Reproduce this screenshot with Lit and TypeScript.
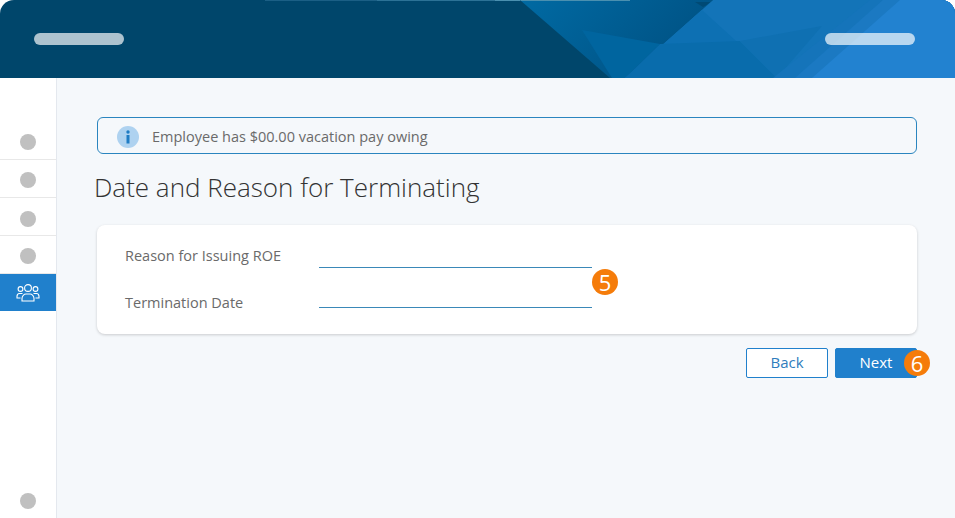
import { LitElement, css, html, svg } from 'lit';
import { customElement } from 'lit/decorators.js';

const SHAPES = [
  { points: '265,0 377,0 377,1 265,1', fill: '#1b5f85' },
  { points: '377,0 495,0 495,1 377,1', fill: '#2c7296' },
  { points: '495,0 520,0 520,1 495,1', fill: '#4a90b0' },
  { points: '520,0 713,0 625,78 610,78', fill: 'url(#band)' },
  { points: '520,0 630,0 630,1 521,1', fill: '#4a90b0' },
  { points: '695,2 712,2 703,7', fill: '#004a75' },
  { points: '582,30 660,44 625,78 612,78', fill: '#00659f' },
  { points: '713,0 955,0 955,78 625,78', fill: '#1374b8' },
  { points: '713,0 625,78 777,78 702,10', fill: '#0d70b3' },
  { points: '660,44 740,41 777,78 625,78', fill: '#096cac' },
  { points: '740,41 822,26 777,78', fill: '#0f70b2' },
  { points: '870,0 955,0 955,78 773,78', fill: '#1574ba' },
  { points: '883,0 955,0 955,78 795,78', fill: '#1b79c2' },
  { points: '900,0 955,0 955,78 812,78', fill: '#2282d0' },
];

@customElement('app-root')
export class AppRoot extends LitElement {
  static styles = css`
    :host {
      display: block;
      width: 955px;
      height: 518px;
      overflow: hidden;
      background: #fff;
      font-family: 'Open Sans', sans-serif;
      color: #555;
    }

    .header {
      position: relative;
      height: 78px;
      padding: 0 40px 0 34px;
      display: flex;
      align-items: center;
      justify-content: space-between;
      background: #00466b;
      border-radius: 14px 14px 0 0;
      overflow: hidden;
      box-sizing: border-box;
    }
    .header-art {
      position: absolute;
      left: 0;
      top: 0;
    }
    .pill {
      position: relative;
      width: 90px;
      height: 12px;
      border-radius: 6px;
      background: rgba(255, 255, 255, 0.68);
    }

    .body {
      display: flex;
      height: 440px;
    }

    .sidebar {
      width: 56px;
      flex: none;
      background: #fff;
      border-right: 1px solid #e4e8ee;
      box-shadow: 1px 0 2px rgba(0, 0, 0, 0.04);
      display: flex;
      flex-direction: column;
      padding-top: 44px;
    }
    .nav-item {
      height: 37px;
      display: flex;
      align-items: center;
      justify-content: center;
      border-bottom: 1px solid #e8e8e8;
    }
    .nav-item .dot {
      margin-top: 2px;
    }
    .nav-item.third .dot {
      margin-top: 4px;
    }
    .nav-item.active {
      background: #2080cc;
      border-bottom: none;
    }
    .nav-item.last {
      margin-top: auto;
      height: 34px;
      border-bottom: none;
    }
    .nav-item.last .dot {
      margin-top: 0;
    }
    .dot {
      width: 16px;
      height: 16px;
      border-radius: 50%;
      background: #c0c0c0;
    }

    .content {
      flex: 1;
      min-width: 0;
      background: #f5f8fb;
      padding: 39px 38px 0 40px;
      display: flex;
      flex-direction: column;
    }

    .notice {
      height: 37px;
      box-sizing: border-box;
      border: 1px solid #2a85bf;
      border-radius: 6px;
      display: flex;
      align-items: center;
      gap: 13px;
      padding: 2px 0 0 19px;
      font-size: 14.5px;
      color: #6a6a6a;
    }
    .info {
      flex: none;
    }

    h1 {
      margin: 15px 0 0 -3px;
      font-size: 26px;
      line-height: 37px;
      font-weight: 300;
      color: #333;
    }

    .card {
      margin-top: 19px;
      height: 109px;
      box-sizing: border-box;
      background: #fff;
      border-radius: 8px;
      box-shadow: 0 1px 3px rgba(0, 0, 0, 0.18);
      padding: 19px 28px 0;
    }
    .row {
      display: flex;
      height: 24px;
      align-items: flex-start;
      font-size: 14.5px;
      line-height: 22px;
      color: #6a6a6a;
    }
    .row + .row {
      margin-top: 23px;
    }
    .row label {
      width: 194px;
      flex: none;
      padding-top: 1px;
    }
    .line {
      width: 273px;
      height: 24px;
      box-sizing: border-box;
      border-bottom: 1px solid #3a88b8;
    }
    .row + .row .line {
      height: 17px;
    }

    .actions {
      margin-top: 14px;
      display: flex;
      justify-content: flex-end;
      gap: 7px;
    }
    .btn {
      width: 82px;
      height: 30px;
      box-sizing: border-box;
      border: 1px solid #2080cc;
      border-radius: 2px;
      font: 15px 'Open Sans', sans-serif;
      padding: 0 0 2px;
    }
    .btn.back {
      background: #fff;
      color: #2f7dbd;
    }
    .btn.next {
      background: #2080cc;
      color: #fff;
    }

    .badge {
      position: absolute;
      width: 26px;
      height: 26px;
      border-radius: 50%;
      background: #f57c0a;
      color: #fff;
      font-size: 22px;
      line-height: 26px;
      text-align: center;
    }
    .badge.five {
      left: 592px;
      top: 269px;
    }
    .badge.six {
      left: 904px;
      top: 350px;
    }
  `;

  render() {
    return html`
      <div class="header">
        <svg class="header-art" width="955" height="78" viewBox="0 0 955 78">
          <defs>
            <linearGradient id="band" x1="0" y1="0" x2="1" y2="0.4">
              <stop offset="0" stop-color="#006aa3"></stop>
              <stop offset="1" stop-color="#005284"></stop>
            </linearGradient>
          </defs>
          ${SHAPES.map((s) => svg`<polygon points=${s.points} fill=${s.fill}></polygon>`)}
        </svg>
        <div class="pill"></div>
        <div class="pill"></div>
      </div>
      <div class="body">
        <nav class="sidebar">
          <div class="nav-item"><span class="dot"></span></div>
          <div class="nav-item"><span class="dot"></span></div>
          <div class="nav-item third"><span class="dot"></span></div>
          <div class="nav-item"><span class="dot"></span></div>
          <div class="nav-item active">
            <svg width="24" height="20" viewBox="0 0 24 20" fill="none" stroke="#fff" stroke-width="1.1">
              <circle cx="12" cy="5" r="3.400"></circle>
              <circle cx="4.500" cy="6" r="2.400"></circle>
              <circle cx="19.500" cy="6" r="2.400"></circle>
              <path d="M6 18v-2.500c0-2.500 2-4.500 4-4.500h4c2 0 4 2 4 4.500V18z"></path>
              <path d="M6.500 10.500H3.500C2 10.500 1 12 1 13.500V15h3.500"></path>
              <path d="M17.500 10.500h3c1.500 0 2.500 1.500 2.500 3V15h-3.500"></path>
            </svg>
          </div>
          <div class="nav-item last"><span class="dot"></span></div>
        </nav>
        <main class="content">
          <div class="notice">
            <svg class="info" width="22" height="22" viewBox="0 0 22 22">
              <circle cx="11" cy="11" r="11" fill="#aed2f0"></circle>
              <circle cx="11" cy="6" r="1.700" fill="#1f7cc4"></circle>
              <rect x="9.500" y="9" width="3" height="8.500" fill="#1f7cc4"></rect>
            </svg>
            <span>Employee has $00.00 vacation pay owing</span>
          </div>
          <h1>Date and Reason for Terminating</h1>
          <div class="card">
            <div class="row"><label>Reason for Issuing ROE</label><div class="line"></div></div>
            <div class="row"><label>Termination Date</label><div class="line"></div></div>
          </div>
          <div class="actions">
            <button class="btn back">Back</button>
            <button class="btn next">Next</button>
          </div>
        </main>
      </div>
      <span class="badge five">5</span>
      <span class="badge six">6</span>
    `;
  }
}
